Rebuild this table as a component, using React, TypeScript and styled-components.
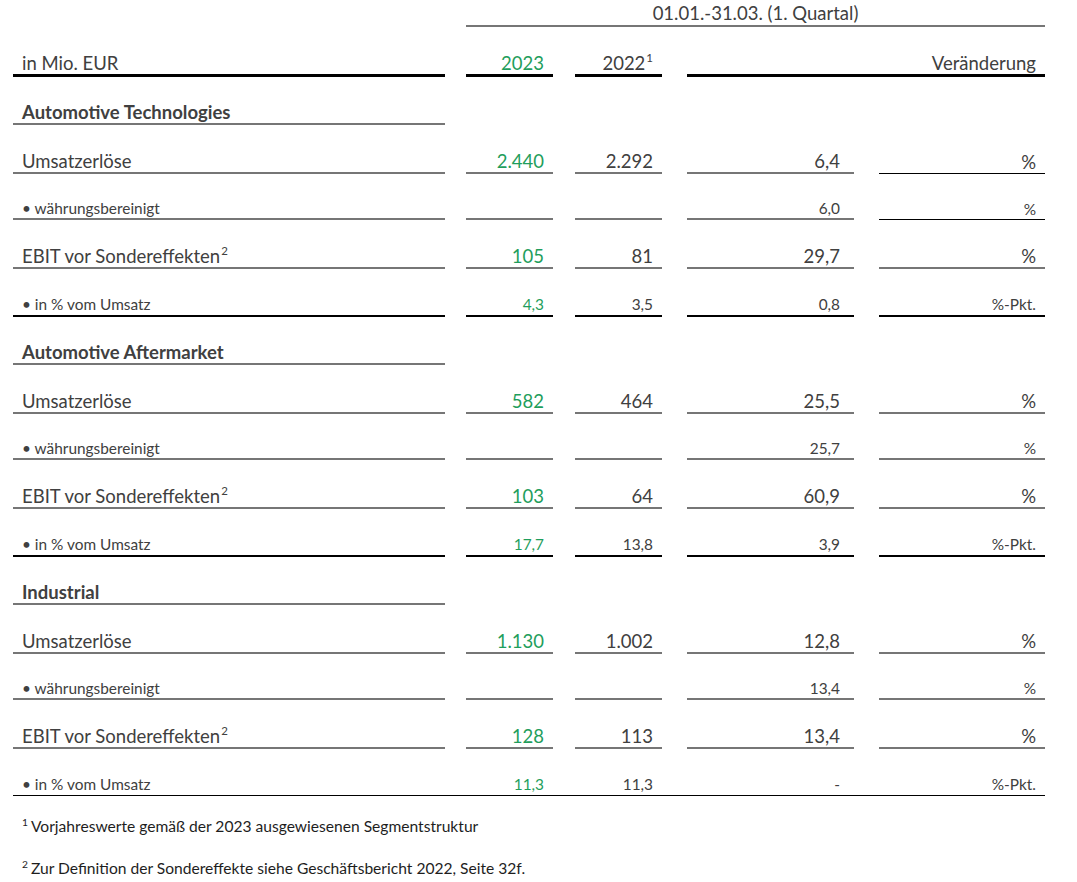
import React from "react";
import styled, { createGlobalStyle, css } from "styled-components";

const Global = createGlobalStyle`
  html, body { margin: 0; padding: 0; background: #ffffff; }
  body { font-family: "Lato", "Liberation Sans", sans-serif; color: #404040; }
`;

const GREEN = "#1f9e5c";
const TEXT = "#404040";
const GREY_LINE = "#767676";

type Line = "grey" | "black" | "thick" | "thin" | "none";

const lineCss = (l: Line) => {
  switch (l) {
    case "grey":
      return css`border-bottom: 2px solid ${GREY_LINE};`;
    case "black":
      return css`border-bottom: 2px solid #000;`;
    case "thick":
      return css`border-bottom: 3px solid #000;`;
    case "thin":
      return css`border-bottom: 1px solid #000;`;
    default:
      return css`border-bottom: 0;`;
  }
};

const Page = styled.div`
  width: 1077px;
  height: 882px;
  box-sizing: border-box;
  padding: 0 0 0 13px;
  overflow: hidden;
`;

const Row = styled.div<{ $h: number; $rule?: boolean }>`
  display: grid;
  grid-template-columns: 432px 21px 87px 22px 87px 25px 167px 25px 166px;
  width: 1032px;
  height: ${(p) => p.$h}px;
  box-sizing: border-box;
  ${(p) => (p.$rule ? css`border-bottom: 1px solid #000;` : "")}
`;

const Cell = styled.div<{
  $col: string;
  $line: Line;
  $align?: "left" | "right" | "center";
  $pad?: number;
  $size: number;
  $bold?: boolean;
  $green?: boolean;
  $bottom?: number;
}>`
  grid-column: ${(p) => p.$col};
  display: flex;
  align-items: flex-end;
  justify-content: ${(p) =>
    p.$align === "right" ? "flex-end" : p.$align === "center" ? "center" : "flex-start"};
  box-sizing: border-box;
  padding-left: ${(p) => (p.$align === "left" || !p.$align ? p.$pad ?? 9 : 0)}px;
  padding-right: ${(p) => (p.$align === "right" ? p.$pad ?? 9 : 0)}px;
  padding-bottom: ${(p) => p.$bottom ?? 0}px;
  font-size: ${(p) => p.$size}px;
  line-height: 1;
  font-weight: ${(p) => (p.$bold ? 700 : 400)};
  color: ${(p) => (p.$green ? GREEN : TEXT)};
  white-space: nowrap;
  ${(p) => lineCss(p.$line)}
`;

const Text = styled.span`
  display: inline-block;
`;

const Sup = styled.sup`
  font-size: 0.62em;
  line-height: 0;
  vertical-align: 0;
  position: relative;
  top: -0.62em;
  margin-left: 1px;
`;

const Footnotes = styled.div`
  display: flex;
  flex-direction: column;
  gap: 22px;
  padding: 20px 0 0 9px;
  font-size: 15.6px;
  line-height: 20px;
  color: #1e1e1e;
`;

const FootSup = styled.sup`
  font-size: 0.66em;
  line-height: 0;
  vertical-align: 0;
  position: relative;
  top: -0.6em;
  margin-right: 3px;
`;

type Kind = "main" | "sub" | "pct" | "final";

interface DataRow {
  label: string;
  sup?: string;
  kind: Kind;
  y23?: string;
  y22?: string;
  chg: string;
  unit: string;
  unitLine?: Line;
}

interface Section {
  title: string;
  rows: DataRow[];
}

const sections: Section[] = [
  {
    title: "Automotive Technologies",
    rows: [
      { label: "Umsatzerlöse", kind: "main", y23: "2.440", y22: "2.292", chg: "6,4", unit: "%", unitLine: "thin" },
      { label: "• währungsbereinigt", kind: "sub", chg: "6,0", unit: "%", unitLine: "thin" },
      { label: "EBIT vor Sondereffekten", sup: "2", kind: "main", y23: "105", y22: "81", chg: "29,7", unit: "%" },
      { label: "• in % vom Umsatz", kind: "pct", y23: "4,3", y22: "3,5", chg: "0,8", unit: "%-Pkt." },
    ],
  },
  {
    title: "Automotive Aftermarket",
    rows: [
      { label: "Umsatzerlöse", kind: "main", y23: "582", y22: "464", chg: "25,5", unit: "%" },
      { label: "• währungsbereinigt", kind: "sub", chg: "25,7", unit: "%" },
      { label: "EBIT vor Sondereffekten", sup: "2", kind: "main", y23: "103", y22: "64", chg: "60,9", unit: "%" },
      { label: "• in % vom Umsatz", kind: "pct", y23: "17,7", y22: "13,8", chg: "3,9", unit: "%-Pkt." },
    ],
  },
  {
    title: "Industrial",
    rows: [
      { label: "Umsatzerlöse", kind: "main", y23: "1.130", y22: "1.002", chg: "12,8", unit: "%" },
      { label: "• währungsbereinigt", kind: "sub", chg: "13,4", unit: "%" },
      { label: "EBIT vor Sondereffekten", sup: "2", kind: "main", y23: "128", y22: "113", chg: "13,4", unit: "%" },
      { label: "• in % vom Umsatz", kind: "final", y23: "11,3", y22: "11,3", chg: "-", unit: "%-Pkt." },
    ],
  },
];

const heights: Record<Kind, number> = { main: 49, sub: 46, pct: 48, final: 47 };

const BIG = 18.5;
const SMALL = 15.4;

function DataLine({ r }: { r: DataRow }) {
  const big = r.kind === "main";
  const size = big ? BIG : SMALL;
  const line: Line = r.kind === "pct" ? "black" : r.kind === "final" ? "none" : "grey";
  const unitLine: Line = r.unitLine ?? line;
  const bottom = big ? 2 : r.kind === "sub" ? 2 : 3;
  return (
    <Row $h={heights[r.kind]} $rule={r.kind === "final"}>
      <Cell $col="1" $line={line} $size={size} $bottom={bottom}>
        <Text>
          {r.label}
          {r.sup && <Sup>{r.sup}</Sup>}
        </Text>
      </Cell>
      <Cell $col="3" $line={line} $align="right" $size={size} $green $bottom={bottom}>
        {r.y23 ?? ""}
      </Cell>
      <Cell $col="5" $line={line} $align="right" $size={size} $bottom={bottom}>
        {r.y22 ?? ""}
      </Cell>
      <Cell $col="7" $line={line} $align="right" $pad={14} $size={size} $bottom={bottom}>
        {r.chg}
      </Cell>
      <Cell $col="9" $line={unitLine} $align="right" $size={size} $bottom={bottom}>
        {r.unit}
      </Cell>
    </Row>
  );
}

export default function App() {
  return (
    <>
      <Global />
      <Page>
        <Row $h={27}>
          <Cell $col="3 / 10" $line="grey" $align="center" $size={BIG} $bottom={3}>
            01.01.-31.03. (1. Quartal)
          </Cell>
        </Row>
        <Row $h={50}>
          <Cell $col="1" $line="thick" $size={BIG} $bottom={2}>
            in Mio. EUR
          </Cell>
          <Cell $col="3" $line="thick" $align="right" $size={BIG} $green $bottom={2}>
            2023
          </Cell>
          <Cell $col="5" $line="thick" $align="right" $size={BIG} $bottom={2}>
            <Text>
              2022<Sup>1</Sup>
            </Text>
          </Cell>
          <Cell $col="7 / 10" $line="thick" $align="right" $size={BIG} $bottom={2}>
            Veränderung
          </Cell>
        </Row>
        {sections.map((s) => (
          <React.Fragment key={s.title}>
            <Row $h={48}>
              <Cell $col="1" $line="grey" $size={BIG} $bold $bottom={2}>
                {s.title}
              </Cell>
            </Row>
            {s.rows.map((r, i) => (
              <DataLine key={i} r={r} />
            ))}
          </React.Fragment>
        ))}
        <Footnotes>
          <div>
            <FootSup>1</FootSup>Vorjahreswerte gemäß der 2023 ausgewiesenen Segmentstruktur
          </div>
          <div>
            <FootSup>2</FootSup>Zur Definition der Sondereffekte siehe Geschäftsbericht 2022, Seite 32f.
          </div>
        </Footnotes>
      </Page>
    </>
  );
}
